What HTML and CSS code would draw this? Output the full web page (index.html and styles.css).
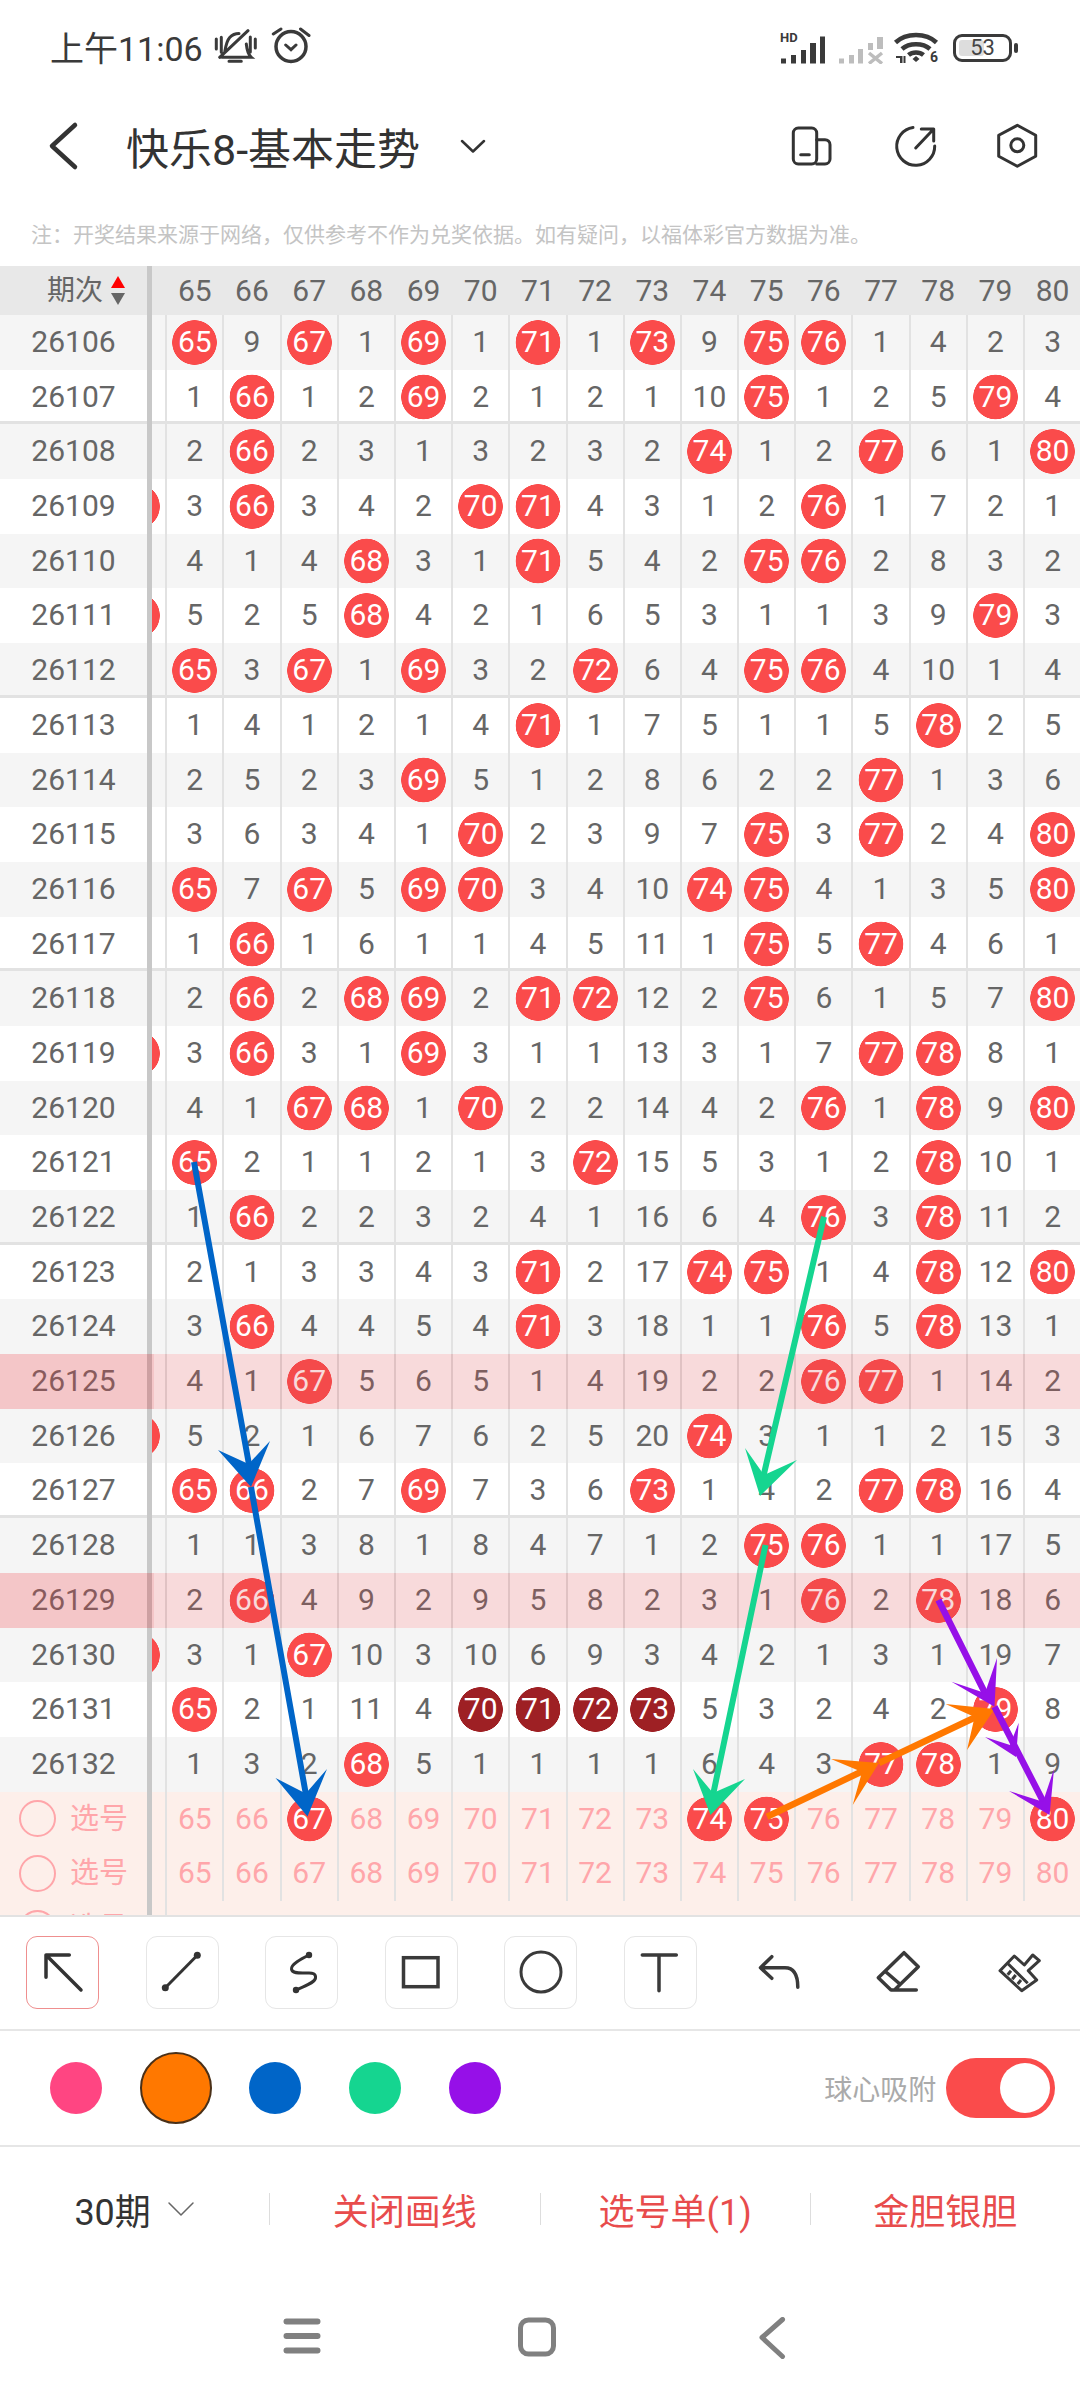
FILE: index.html
```html
<!DOCTYPE html>
<html lang="zh-CN">
<head>
    <meta charset="UTF-8">
    <meta name="viewport" content="width=device-width, initial-scale=1.0">
    <title>快乐8-基本走势</title>
    <link rel="stylesheet" href="styles.css">
</head>
<body>
<div class="page">
    <div class="statusbar">
        <div class="status-left">
            <span class="time">上午11:06</span>
            <svg class="ico" width="46" height="38" viewBox="0 0 46 38"><path d="M11.7 25.3C13 18 13.5 14 16.7 10.5C19 8 22 6.5 26 6.5M33.3 17C33.8 22 34.5 27 38.3 30.3H9M6.7 30.3L35 3.7M16 34.3H28.3M3.3 12V22M8.3 10.3V25.3M37.3 10V25M42.3 12V21" fill="none" stroke="#3a3a3a" stroke-width="3" stroke-linecap="round"/></svg>
            <svg class="ico alarm" width="42" height="38" viewBox="0 0 42 38"><circle cx="21" cy="19.5" r="15" fill="none" stroke="#3a3a3a" stroke-width="3.5"/><path d="M15.7 18L21 22.7L26 18M3.3 7L11 2M30.5 2L39 8.5" fill="none" stroke="#3a3a3a" stroke-width="3" stroke-linecap="round"/></svg>
        </div>
        <div class="status-right">
            <div class="hd-signal">
                <span class="hd">HD</span>
                <svg width="46" height="30" viewBox="0 0 46 30"><path d="M1 24.5h5v5H1zM11 21h5v8.5h-5zM21 16h5v13.5h-5zM30 9h6v20.5h-6zM40 2.5h5v27h-5z" fill="#3a3a3a"/></svg>
            </div>
            <svg class="sig2" width="46" height="30" viewBox="0 0 46 30"><path d="M1 24.5h5v5H1zM11 21h5v8.5h-5zM20 15h5v14.5h-5zM30 9h5v7h-5zM39 3h6v12h-6z" fill="#bdbdbd"/><path d="M31 19L44 29.5M44 19L31 29.5" stroke="#bdbdbd" stroke-width="3.5"/></svg>
            <svg class="wifi" width="46" height="34" viewBox="0 0 46 34"><path d="M2.5 12.5C13 2.5 33 2.5 43.5 12.5M9 19C16 12.5 30 12.5 37 19M15.500 25C19.500 21.500 26.500 21.500 30.500 25" fill="none" stroke="#3a3a3a" stroke-width="4.5"/><path d="M19.500 29l3.500-3 3.500 3-3.500 3z" fill="#3a3a3a"/><path d="M3 27h5v6M8.5 26v7M11.5 26v7" fill="none" stroke="#3a3a3a" stroke-width="2"/></svg>
            <span class="wifi-six">6</span>
            <div class="battery">
                <span class="battery-level"></span>
                <span class="battery-num">53</span>
            </div>
            <span class="battery-tip"></span>
        </div>
    </div>

    <div class="topbar">
        <svg class="back" width="36" height="50" viewBox="0 0 36 50"><path d="M28 4L5 25L28 46" fill="none" stroke="#333" stroke-width="4.5" stroke-linecap="round" stroke-linejoin="round"/></svg>
        <span class="title">快乐8-基本走势</span>
        <svg class="title-arrow" width="26" height="14" viewBox="0 0 26 14"><path d="M2 2L13 12.5L24 2" fill="none" stroke="#333" stroke-width="2.5" stroke-linecap="round" stroke-linejoin="round"/></svg>
        <div class="top-icons">
            <svg width="44" height="42" viewBox="0 0 44 42"><rect x="3.3" y="3" width="23.4" height="36" rx="5" fill="none" stroke="#333" stroke-width="3"/><path d="M26.7 14.7H35a5 5 0 0 1 5 5V34a5 5 0 0 1-5 5H26.700M10.700 29.700H19.300" fill="none" stroke="#333" stroke-width="3" stroke-linecap="round"/></svg>
            <svg width="44" height="44" viewBox="0 0 44 44"><path d="M20 3.500A19 19 0 1 0 41.700 22M22.700 24L40.700 5M28.300 5H40.700V17" fill="none" stroke="#333" stroke-width="3" stroke-linecap="round" stroke-linejoin="round"/></svg>
            <svg width="44" height="48" viewBox="0 0 44 48"><path d="M21.300 3.300L39.700 13.300V34.300L21.300 44.300L2.700 34.300V13.300Z" fill="none" stroke="#333" stroke-width="3" stroke-linejoin="round"/><circle cx="21.300" cy="23.300" r="6.500" fill="none" stroke="#333" stroke-width="3"/></svg>
        </div>
    </div>

    <p class="note">注：开奖结果来源于网络，仅供参考不作为兑奖依据。如有疑问，以福体彩官方数据为准。</p>

    <div class="chart">
        <div class="head">
            <div class="period"><span class="period-text">期次</span><span class="sort"><i class="up"></i><i class="down"></i></span></div>
            <div class="cells"><span></span><span>65</span><span>66</span><span>67</span><span>68</span><span>69</span><span>70</span><span>71</span><span>72</span><span>73</span><span>74</span><span>75</span><span>76</span><span>77</span><span>78</span><span>79</span><span>80</span></div>
        </div>

        <div class="row even"><div class="period">26106</div><div class="cells"><span></span><span class="b">65</span><span>9</span><span class="b">67</span><span>1</span><span class="b">69</span><span>1</span><span class="b">71</span><span>1</span><span class="b">73</span><span>9</span><span class="b">75</span><span class="b">76</span><span>1</span><span>4</span><span>2</span><span>3</span></div></div>
        <div class="row sep"><div class="period">26107</div><div class="cells"><span></span><span>1</span><span class="b">66</span><span>1</span><span>2</span><span class="b">69</span><span>2</span><span>1</span><span>2</span><span>1</span><span>10</span><span class="b">75</span><span>1</span><span>2</span><span>5</span><span class="b">79</span><span>4</span></div></div>
        <div class="row even"><div class="period">26108</div><div class="cells"><span></span><span>2</span><span class="b">66</span><span>2</span><span>3</span><span>1</span><span>3</span><span>2</span><span>3</span><span>2</span><span class="b">74</span><span>1</span><span>2</span><span class="b">77</span><span>6</span><span>1</span><span class="b">80</span></div></div>
        <div class="row"><div class="period">26109</div><div class="cells"><span class="b"></span><span>3</span><span class="b">66</span><span>3</span><span>4</span><span>2</span><span class="b">70</span><span class="b">71</span><span>4</span><span>3</span><span>1</span><span>2</span><span class="b">76</span><span>1</span><span>7</span><span>2</span><span>1</span></div></div>
        <div class="row even"><div class="period">26110</div><div class="cells"><span></span><span>4</span><span>1</span><span>4</span><span class="b">68</span><span>3</span><span>1</span><span class="b">71</span><span>5</span><span>4</span><span>2</span><span class="b">75</span><span class="b">76</span><span>2</span><span>8</span><span>3</span><span>2</span></div></div>
        <div class="row"><div class="period">26111</div><div class="cells"><span class="b"></span><span>5</span><span>2</span><span>5</span><span class="b">68</span><span>4</span><span>2</span><span>1</span><span>6</span><span>5</span><span>3</span><span>1</span><span>1</span><span>3</span><span>9</span><span class="b">79</span><span>3</span></div></div>
        <div class="row even sep"><div class="period">26112</div><div class="cells"><span></span><span class="b">65</span><span>3</span><span class="b">67</span><span>1</span><span class="b">69</span><span>3</span><span>2</span><span class="b">72</span><span>6</span><span>4</span><span class="b">75</span><span class="b">76</span><span>4</span><span>10</span><span>1</span><span>4</span></div></div>
        <div class="row"><div class="period">26113</div><div class="cells"><span></span><span>1</span><span>4</span><span>1</span><span>2</span><span>1</span><span>4</span><span class="b">71</span><span>1</span><span>7</span><span>5</span><span>1</span><span>1</span><span>5</span><span class="b">78</span><span>2</span><span>5</span></div></div>
        <div class="row even"><div class="period">26114</div><div class="cells"><span></span><span>2</span><span>5</span><span>2</span><span>3</span><span class="b">69</span><span>5</span><span>1</span><span>2</span><span>8</span><span>6</span><span>2</span><span>2</span><span class="b">77</span><span>1</span><span>3</span><span>6</span></div></div>
        <div class="row"><div class="period">26115</div><div class="cells"><span></span><span>3</span><span>6</span><span>3</span><span>4</span><span>1</span><span class="b">70</span><span>2</span><span>3</span><span>9</span><span>7</span><span class="b">75</span><span>3</span><span class="b">77</span><span>2</span><span>4</span><span class="b">80</span></div></div>
        <div class="row even"><div class="period">26116</div><div class="cells"><span></span><span class="b">65</span><span>7</span><span class="b">67</span><span>5</span><span class="b">69</span><span class="b">70</span><span>3</span><span>4</span><span>10</span><span class="b">74</span><span class="b">75</span><span>4</span><span>1</span><span>3</span><span>5</span><span class="b">80</span></div></div>
        <div class="row sep"><div class="period">26117</div><div class="cells"><span></span><span>1</span><span class="b">66</span><span>1</span><span>6</span><span>1</span><span>1</span><span>4</span><span>5</span><span>11</span><span>1</span><span class="b">75</span><span>5</span><span class="b">77</span><span>4</span><span>6</span><span>1</span></div></div>
        <div class="row even"><div class="period">26118</div><div class="cells"><span></span><span>2</span><span class="b">66</span><span>2</span><span class="b">68</span><span class="b">69</span><span>2</span><span class="b">71</span><span class="b">72</span><span>12</span><span>2</span><span class="b">75</span><span>6</span><span>1</span><span>5</span><span>7</span><span class="b">80</span></div></div>
        <div class="row"><div class="period">26119</div><div class="cells"><span class="b"></span><span>3</span><span class="b">66</span><span>3</span><span>1</span><span class="b">69</span><span>3</span><span>1</span><span>1</span><span>13</span><span>3</span><span>1</span><span>7</span><span class="b">77</span><span class="b">78</span><span>8</span><span>1</span></div></div>
        <div class="row even"><div class="period">26120</div><div class="cells"><span></span><span>4</span><span>1</span><span class="b">67</span><span class="b">68</span><span>1</span><span class="b">70</span><span>2</span><span>2</span><span>14</span><span>4</span><span>2</span><span class="b">76</span><span>1</span><span class="b">78</span><span>9</span><span class="b">80</span></div></div>
        <div class="row"><div class="period">26121</div><div class="cells"><span></span><span class="b">65</span><span>2</span><span>1</span><span>1</span><span>2</span><span>1</span><span>3</span><span class="b">72</span><span>15</span><span>5</span><span>3</span><span>1</span><span>2</span><span class="b">78</span><span>10</span><span>1</span></div></div>
        <div class="row even sep"><div class="period">26122</div><div class="cells"><span></span><span>1</span><span class="b">66</span><span>2</span><span>2</span><span>3</span><span>2</span><span>4</span><span>1</span><span>16</span><span>6</span><span>4</span><span class="b">76</span><span>3</span><span class="b">78</span><span>11</span><span>2</span></div></div>
        <div class="row"><div class="period">26123</div><div class="cells"><span></span><span>2</span><span>1</span><span>3</span><span>3</span><span>4</span><span>3</span><span class="b">71</span><span>2</span><span>17</span><span class="b">74</span><span class="b">75</span><span>1</span><span>4</span><span class="b">78</span><span>12</span><span class="b">80</span></div></div>
        <div class="row even"><div class="period">26124</div><div class="cells"><span></span><span>3</span><span class="b">66</span><span>4</span><span>4</span><span>5</span><span>4</span><span class="b">71</span><span>3</span><span>18</span><span>1</span><span>1</span><span class="b">76</span><span>5</span><span class="b">78</span><span>13</span><span>1</span></div></div>
        <div class="row hl"><div class="period">26125</div><div class="cells"><span></span><span>4</span><span>1</span><span class="b">67</span><span>5</span><span>6</span><span>5</span><span>1</span><span>4</span><span>19</span><span>2</span><span>2</span><span class="b">76</span><span class="b">77</span><span>1</span><span>14</span><span>2</span></div></div>
        <div class="row even"><div class="period">26126</div><div class="cells"><span class="b"></span><span>5</span><span>2</span><span>1</span><span>6</span><span>7</span><span>6</span><span>2</span><span>5</span><span>20</span><span class="b">74</span><span>3</span><span>1</span><span>1</span><span>2</span><span>15</span><span>3</span></div></div>
        <div class="row sep"><div class="period">26127</div><div class="cells"><span></span><span class="b">65</span><span class="b">66</span><span>2</span><span>7</span><span class="b">69</span><span>7</span><span>3</span><span>6</span><span class="b">73</span><span>1</span><span>4</span><span>2</span><span class="b">77</span><span class="b">78</span><span>16</span><span>4</span></div></div>
        <div class="row even"><div class="period">26128</div><div class="cells"><span></span><span>1</span><span>1</span><span>3</span><span>8</span><span>1</span><span>8</span><span>4</span><span>7</span><span>1</span><span>2</span><span class="b">75</span><span class="b">76</span><span>1</span><span>1</span><span>17</span><span>5</span></div></div>
        <div class="row hl"><div class="period">26129</div><div class="cells"><span></span><span>2</span><span class="b">66</span><span>4</span><span>9</span><span>2</span><span>9</span><span>5</span><span>8</span><span>2</span><span>3</span><span>1</span><span class="b">76</span><span>2</span><span class="b">78</span><span>18</span><span>6</span></div></div>
        <div class="row even"><div class="period">26130</div><div class="cells"><span class="b"></span><span>3</span><span>1</span><span class="b">67</span><span>10</span><span>3</span><span>10</span><span>6</span><span>9</span><span>3</span><span>4</span><span>2</span><span>1</span><span>3</span><span>1</span><span>19</span><span>7</span></div></div>
        <div class="row"><div class="period">26131</div><div class="cells"><span></span><span class="b">65</span><span>2</span><span>1</span><span>11</span><span>4</span><span class="b dark">70</span><span class="b dark">71</span><span class="b dark">72</span><span class="b dark">73</span><span>5</span><span>3</span><span>2</span><span>4</span><span>2</span><span class="b">79</span><span>8</span></div></div>
        <div class="row even"><div class="period">26132</div><div class="cells"><span></span><span>1</span><span>3</span><span>2</span><span class="b">68</span><span>5</span><span>1</span><span>1</span><span>1</span><span>1</span><span>6</span><span>4</span><span>3</span><span class="b">77</span><span class="b">78</span><span>1</span><span>9</span></div></div>

        <div class="row pick"><div class="period"><i class="radio"></i>选号</div><div class="cells"><span></span><span>65</span><span>66</span><span class="b">67</span><span>68</span><span>69</span><span>70</span><span>71</span><span>72</span><span>73</span><span class="b">74</span><span class="b">75</span><span>76</span><span>77</span><span>78</span><span>79</span><span class="b">80</span></div></div>
        <div class="row pick"><div class="period"><i class="radio"></i>选号</div><div class="cells"><span></span><span>65</span><span>66</span><span>67</span><span>68</span><span>69</span><span>70</span><span>71</span><span>72</span><span>73</span><span>74</span><span>75</span><span>76</span><span>77</span><span>78</span><span>79</span><span>80</span></div></div>
        <div class="row pick"><div class="period"><i class="radio"></i>选号</div><div class="cells"><span></span></div></div>
    </div>

    <div class="tools">
        <div class="tool active"><svg width="73" height="73" viewBox="0 0 73 73"><path d="M20 41.3V19H43.3M20 19L55 54" fill="none" stroke="#333" stroke-width="3.5" stroke-linecap="round" stroke-linejoin="round"/></svg></div>
        <div class="tool"><svg width="73" height="73" viewBox="0 0 73 73"><path d="M52.3 19.3L20.3 51.7" stroke="#333" stroke-width="3"/><circle cx="52.3" cy="19.3" r="3.5" fill="#333"/><circle cx="20.3" cy="51.7" r="3.5" fill="#333"/></svg></div>
        <div class="tool"><svg width="73" height="73" viewBox="0 0 73 73"><path d="M44 19C36 23 26 28 26.5 33C27 38 36 37 42 37C48 36.5 51 38 50.5 42C50 47 39 50 31 54" fill="none" stroke="#333" stroke-width="3"/><circle cx="44" cy="19" r="3.2" fill="#333"/><circle cx="31" cy="54" r="3.2" fill="#333"/></svg></div>
        <div class="tool"><svg width="73" height="73" viewBox="0 0 73 73"><rect x="19.5" y="21.7" width="34.5" height="29" fill="none" stroke="#3a3a3a" stroke-width="3.5"/></svg></div>
        <div class="tool"><svg width="73" height="73" viewBox="0 0 73 73"><circle cx="37" cy="36" r="20" fill="none" stroke="#3a3a3a" stroke-width="3"/></svg></div>
        <div class="tool"><svg width="73" height="73" viewBox="0 0 73 73"><path d="M19.3 19H53.3M36 19V54.7" fill="none" stroke="#3a3a3a" stroke-width="3.5" stroke-linecap="round"/></svg></div>
        <div class="tool plain"><svg width="73" height="73" viewBox="0 0 73 73"><path d="M28.8 20.7L17.5 31.7L28.8 42.3M17.5 31.7H42C50 31.7 54.8 38 54.8 51.3" fill="none" stroke="#3a3a3a" stroke-width="3.5" stroke-linecap="round" stroke-linejoin="round"/></svg></div>
        <div class="tool plain"><svg width="73" height="73" viewBox="0 0 73 73"><path d="M42 16.7L56.3 30.7L32.5 54H29L16.3 41.7ZM23.7 35.7L37 47.3M29 54H54.3" fill="none" stroke="#3a3a3a" stroke-width="3.5" stroke-linecap="round" stroke-linejoin="round"/></svg></div>
        <div class="tool plain"><svg width="73" height="73" viewBox="0 0 73 73"><path d="M18 34.7L32.3 20L42.3 29L50.7 19L57.3 24.7L46.3 34.7L54.7 44L39.7 54.7ZM26.3 28L45.7 47.3M29 34.7L25.7 38.7M33.7 39L30.3 43.3M39 44L35.7 48" fill="none" stroke="#3a3a3a" stroke-width="3" stroke-linejoin="round"/></svg></div>
    </div>

    <div class="colors">
        <span class="swatch"><i class="pink"></i></span>
        <span class="swatch"><i class="orange current"></i></span>
        <span class="swatch"><i class="blue"></i></span>
        <span class="swatch"><i class="green"></i></span>
        <span class="swatch"><i class="purple"></i></span>
        <span class="snap-label">球心吸附</span>
        <span class="switch"><i></i></span>
    </div>

    <div class="actions">
        <div class="action term">30期<svg width="28" height="16" viewBox="0 0 28 16"><path d="M2 2L14 14L26 2" fill="none" stroke="#666" stroke-width="1.5" stroke-linecap="round" stroke-linejoin="round"/></svg></div>
        <div class="action">关闭画线</div>
        <div class="action">选号单(1)</div>
        <div class="action">金胆银胆</div>
    </div>

    <div class="sysnav">
        <svg width="38" height="38" viewBox="0 0 38 38"><path d="M3.5 4.500H34.500M3.500 19H34.500M3.500 33.500H34.500" stroke="#808080" stroke-width="6" stroke-linecap="round"/></svg>
        <svg width="40" height="40" viewBox="0 0 40 40"><rect x="3.5" y="3" width="33" height="34" rx="8" fill="none" stroke="#808080" stroke-width="5"/></svg>
        <svg width="28" height="42" viewBox="0 0 28 42"><path d="M24.5 2.500L4 20.500L24.500 39.500" fill="none" stroke="#808080" stroke-width="5" stroke-linecap="round" stroke-linejoin="round"/></svg>
    </div>

    <!-- lines the user drew on the chart -->
    <svg class="drawn" width="1080" height="2400" viewBox="0 0 1080 2400">
        <g stroke="#0065c8" stroke-width="6" fill="#0065c8">
            <path d="M194 1162L250 1470M251 1487L306 1795"/>
            <path stroke="none" d="M251 1487L218 1450L248.6 1464L270 1441Z"/>
            <path stroke="none" d="M307.5 1816.5L275.5 1778L305.8 1793.5L327 1769Z"/>
        </g>
        <g stroke="#15d590" stroke-width="6" fill="#15d590">
            <path d="M824 1216.7L763 1478M765.5 1545L713 1795"/>
            <path stroke="none" d="M760 1496L745 1448L764 1475L797 1460Z"/>
            <path stroke="none" d="M710.5 1815L693 1769L713 1793L745 1779Z"/>
        </g>
        <g stroke="#ff7800" stroke-width="6.5" fill="#ff7800">
            <path d="M767 1816.7L865 1770M879 1763L978 1716"/>
            <path stroke="none" d="M879 1763L831 1759L862 1772L852.7 1805Z"/>
            <path stroke="none" d="M994.5 1709L945.6 1704L974.6 1717L967 1750Z"/>
        </g>
        <g stroke="#9610e8" stroke-width="6.5" fill="#9610e8">
            <path d="M938.4 1600L986 1695M994.5 1706.7L1045 1805"/>
            <path stroke="none" d="M994.5 1706.7L951.5 1681.7L985 1693L997 1658Z"/>
            <path stroke="none" d="M1016 1757L985 1737L1010 1745L1018.7 1722.7Z"/>
            <path stroke="none" d="M1049.6 1815L1009 1791L1043 1801.7L1054 1769Z"/>
        </g>
    </svg>
</div>
</body>
</html>
```

FILE: styles.css
```css
*{
    margin: 0;
    padding: 0;
    box-sizing: border-box;
}
body{
    background: #fff;
    font-family: Roboto, "Noto Sans CJK SC", sans-serif;
    color: #666;
}
i{
    font-style: normal;
}
svg{
    display: block;
}
.page{
    position: relative;
    width: 1080px;
    height: 2400px;
    overflow: hidden;
    display: flex;
    flex-direction: column;
}

/* status bar */
.statusbar{
    height: 92px;
    flex: none;
    display: flex;
    align-items: center;
    justify-content: space-between;
    padding: 0 62px 0 50px;
    color: #3a3a3a;
}
.status-left{
    display: flex;
    align-items: center;
}
.time{
    font-size: 34px;
    margin-right: 10px;
}
.alarm{
    margin-left: 11px;
}
.status-right{
    display: flex;
    align-items: flex-end;
    height: 34px;
    margin-top: 2px;
}
.hd-signal{
    position: relative;
    width: 46px;
}
.hd{
    position: absolute;
    left: 0;
    top: -3px;
    font-size: 13px;
    font-weight: 700;
    line-height: 13px;
}
.sig2{
    margin-left: 12px;
}
.wifi{
    margin-left: 9px;
}
.wifi-six{
    font-size: 14px;
    font-weight: 700;
    line-height: 14px;
    margin-left: -9px;
    margin-right: 15px;
}
.battery{
    position: relative;
    width: 59px;
    height: 28px;
    border: 3px solid #3a3a3a;
    border-radius: 9px;
    margin-bottom: 2px;
    display: flex;
    align-items: center;
    justify-content: center;
}
.battery-level{
    position: absolute;
    left: 3px;
    top: 3px;
    bottom: 3px;
    width: 25px;
    background: #ddd;
    border-radius: 3px;
}
.battery-num{
    position: relative;
    font-size: 22px;
    color: #444;
    line-height: 22px;
}
.battery-tip{
    width: 4px;
    height: 10px;
    background: #3a3a3a;
    border-radius: 2px;
    margin: 0 0 11px 2px;
}

/* title bar */
.topbar{
    height: 108px;
    flex: none;
    display: flex;
    align-items: center;
    padding-left: 47px;
    color: #333;
}
.title{
    font-size: 43px;
    margin-left: 43px;
}
.title-arrow{
    margin-left: 40px;
}
.top-icons{
    margin-left: auto;
    margin-right: 40px;
    display: flex;
    align-items: center;
    gap: 59px;
}

.note{
    height: 66px;
    flex: none;
    padding: 23px 0 0 31px;
    font-size: 21px;
    line-height: 24px;
    color: #c4c4c4;
}

/* chart */
.chart{
    height: 1649px;
    flex: none;
    overflow: hidden;
    font-size: 30px;
    background: #fff;
}
.head,
.row{
    position: relative;
    display: flex;
    height: 54.7px;
    line-height: 54.7px;
}
.head{
    height: 49px;
    line-height: 49px;
    background: #e8e8e8;
}
.period{
    width: 152px;
    flex: none;
    border-right: 5px solid #c8c8c8;
    text-align: center;
}
.head .period{
    display: flex;
    align-items: center;
    padding-left: 47px;
}
.period-text{
    font-size: 28px;
}
.sort{
    display: flex;
    flex-direction: column;
    gap: 5px;
    margin-left: 8px;
}
.sort i{
    width: 0;
    height: 0;
    border-left: 7px solid transparent;
    border-right: 7px solid transparent;
}
.sort .up{
    border-bottom: 12px solid #f00;
}
.sort .down{
    border-top: 12px solid #666;
}
.cells{
    flex: 1;
    display: flex;
    overflow: hidden;
}
.cells span{
    flex: none;
    width: 57.2px;
    text-align: center;
    border-right: 2px solid #e2e2e2;
}
.cells span:first-child{
    margin-left: -42px;
}
.head .cells span{
    border-right: 0;
    padding-right: 2px;
}
.even{
    background: #f5f5f5;
}
.sep{
    box-shadow: inset 0 -3px #e2e2e2;
}
.cells .b{
    color: #fff;
    background: radial-gradient(circle at center, #fa4b4b 22px, transparent 22.6px);
}
.cells .dark{
    background: radial-gradient(circle at center, #9e2024 22px, transparent 22.6px);
}

/* highlighted rows sit behind a pink film, the frozen part gets it twice */
.hl::before,
.hl::after{
    content: "";
    position: absolute;
    left: 0;
    top: 0;
    bottom: 0;
    background: rgba(220, 70, 75, 0.2);
}
.hl::before{
    width: 154px;
    background: rgba(220, 70, 75, 0.13);
}
.hl::after{
    right: 0;
}

.pick{
    background: #fdefea;
    color: #ffa6aa;
}
.pick .period{
    display: flex;
    align-items: center;
    padding-left: 19px;
    font-size: 29px;
}
.radio{
    width: 37px;
    height: 37px;
    border: 2px solid #ffa6aa;
    border-radius: 50%;
    margin-right: 14px;
}

/* drawing tools */
.tools{
    height: 116px;
    flex: none;
    display: flex;
    gap: 46.5px;
    padding: 19px 0 0 26px;
    border-top: 2px solid #e2e2e2;
    border-bottom: 2px solid #e6e6e6;
}
.tool{
    width: 73px;
    height: 73px;
    flex: none;
    border: 1.5px solid #e6e6e6;
    border-radius: 11px;
}
.tool svg{
    margin: -1.5px;
}
.tool.active{
    border-color: #ef8f8f;
}
.tool.plain{
    border-color: transparent;
}

.colors{
    height: 116px;
    flex: none;
    display: flex;
    align-items: center;
    gap: 27.7px;
    padding: 0 25px 0 40px;
    border-bottom: 2px solid #e6e6e6;
}
.swatch{
    width: 72px;
    height: 72px;
    flex: none;
    display: flex;
    align-items: center;
    justify-content: center;
}
.swatch i{
    width: 52px;
    height: 52px;
    border-radius: 50%;
}
.swatch .current{
    width: 72px;
    height: 72px;
    border: 2px solid #4a3018;
}
.pink{
    background: #ff4582;
}
.orange{
    background: #ff7800;
}
.blue{
    background: #0065c8;
}
.green{
    background: #15d590;
}
.purple{
    background: #9610e8;
}
.snap-label{
    margin-left: auto;
    font-size: 28px;
    color: #aaa;
    margin-right: -18px;
}
.switch{
    width: 109px;
    height: 60px;
    border-radius: 30px;
    background: #fa4b4b;
    display: flex;
    justify-content: flex-end;
    align-items: center;
    padding-right: 5px;
}
.switch i{
    width: 50px;
    height: 50px;
    border-radius: 50%;
    background: #fff;
}

.actions{
    height: 126px;
    flex: none;
    display: flex;
    align-items: center;
    padding-bottom: 2px;
    font-size: 36px;
    color: #e84c4c;
}
.action{
    flex: 1;
    height: 32px;
    display: flex;
    align-items: center;
    justify-content: center;
    border-left: 1px solid #ddd;
}
.action.term{
    border-left: 0;
    color: #333;
    gap: 16px;
}

.sysnav{
    height: 127px;
    flex: none;
    position: relative;
}
.sysnav svg{
    position: absolute;
    top: 44px;
}
.sysnav svg:nth-child(1){
    left: 283px;
}
.sysnav svg:nth-child(2){
    left: 517px;
}
.sysnav svg:nth-child(3){
    left: 758px;
}

.drawn{
    position: absolute;
    left: 0;
    top: 0;
    pointer-events: none;
}
```
